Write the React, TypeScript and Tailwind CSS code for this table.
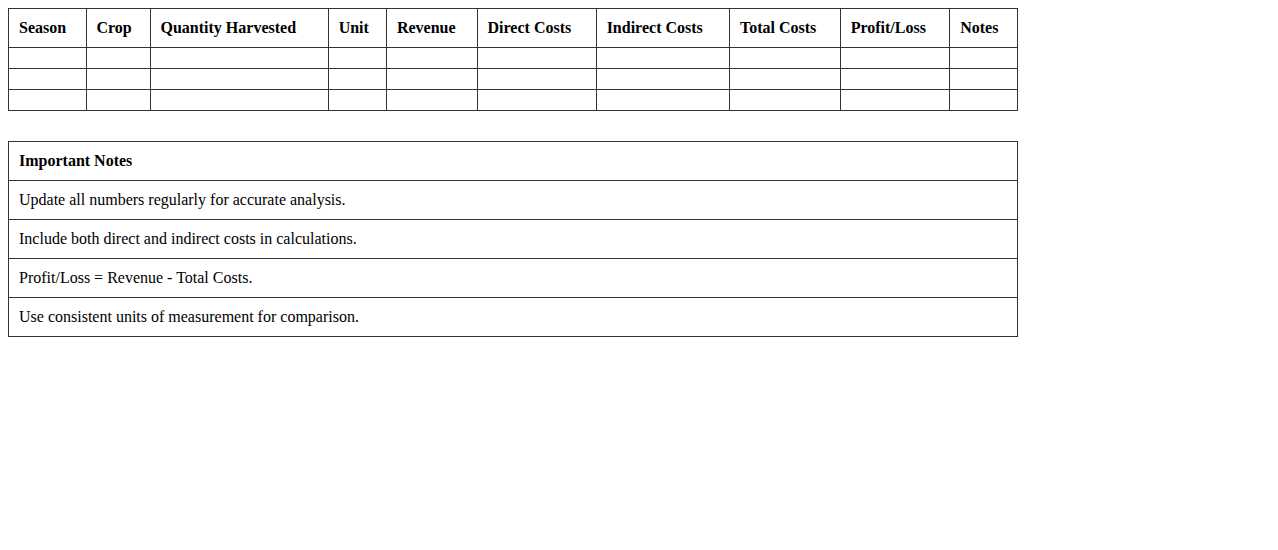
import React from "react";

const headers = ["Season", "Crop", "Quantity Harvested", "Unit", "Revenue", "Direct Costs", "Indirect Costs", "Total Costs", "Profit/Loss", "Notes"];
const notes = [
  "Update all numbers regularly for accurate analysis.",
  "Include both direct and indirect costs in calculations.",
  "Profit/Loss = Revenue - Total Costs.",
  "Use consistent units of measurement for comparison.",
];

export default function App() {
  return (
    <div className="m-2 bg-white text-black text-[16px]" style={{ fontFamily: '"Liberation Serif", "Times New Roman", serif' }}>
      <table className="w-4/5 border-collapse mb-[30px]">
        <thead>
          <tr>
            {headers.map((h) => (
              <th key={h} className="border border-[#333] p-[10px] text-left font-bold leading-[18px]">{h}</th>
            ))}
          </tr>
        </thead>
        <tbody>
          {[0, 1, 2].map((r) => (
            <tr key={r}>
              {headers.map((h) => (
                <td key={h} className="border border-[#333] p-[10px]"></td>
              ))}
            </tr>
          ))}
        </tbody>
      </table>
      <table className="w-4/5 border-collapse">
        <thead>
          <tr>
            <th className="border border-[#333] p-[10px] text-left font-bold leading-[18px]">Important Notes</th>
          </tr>
        </thead>
        <tbody>
          {notes.map((n) => (
            <tr key={n}>
              <td className="border border-[#333] p-[10px] leading-[18px]">{n}</td>
            </tr>
          ))}
        </tbody>
      </table>
    </div>
  );
}
